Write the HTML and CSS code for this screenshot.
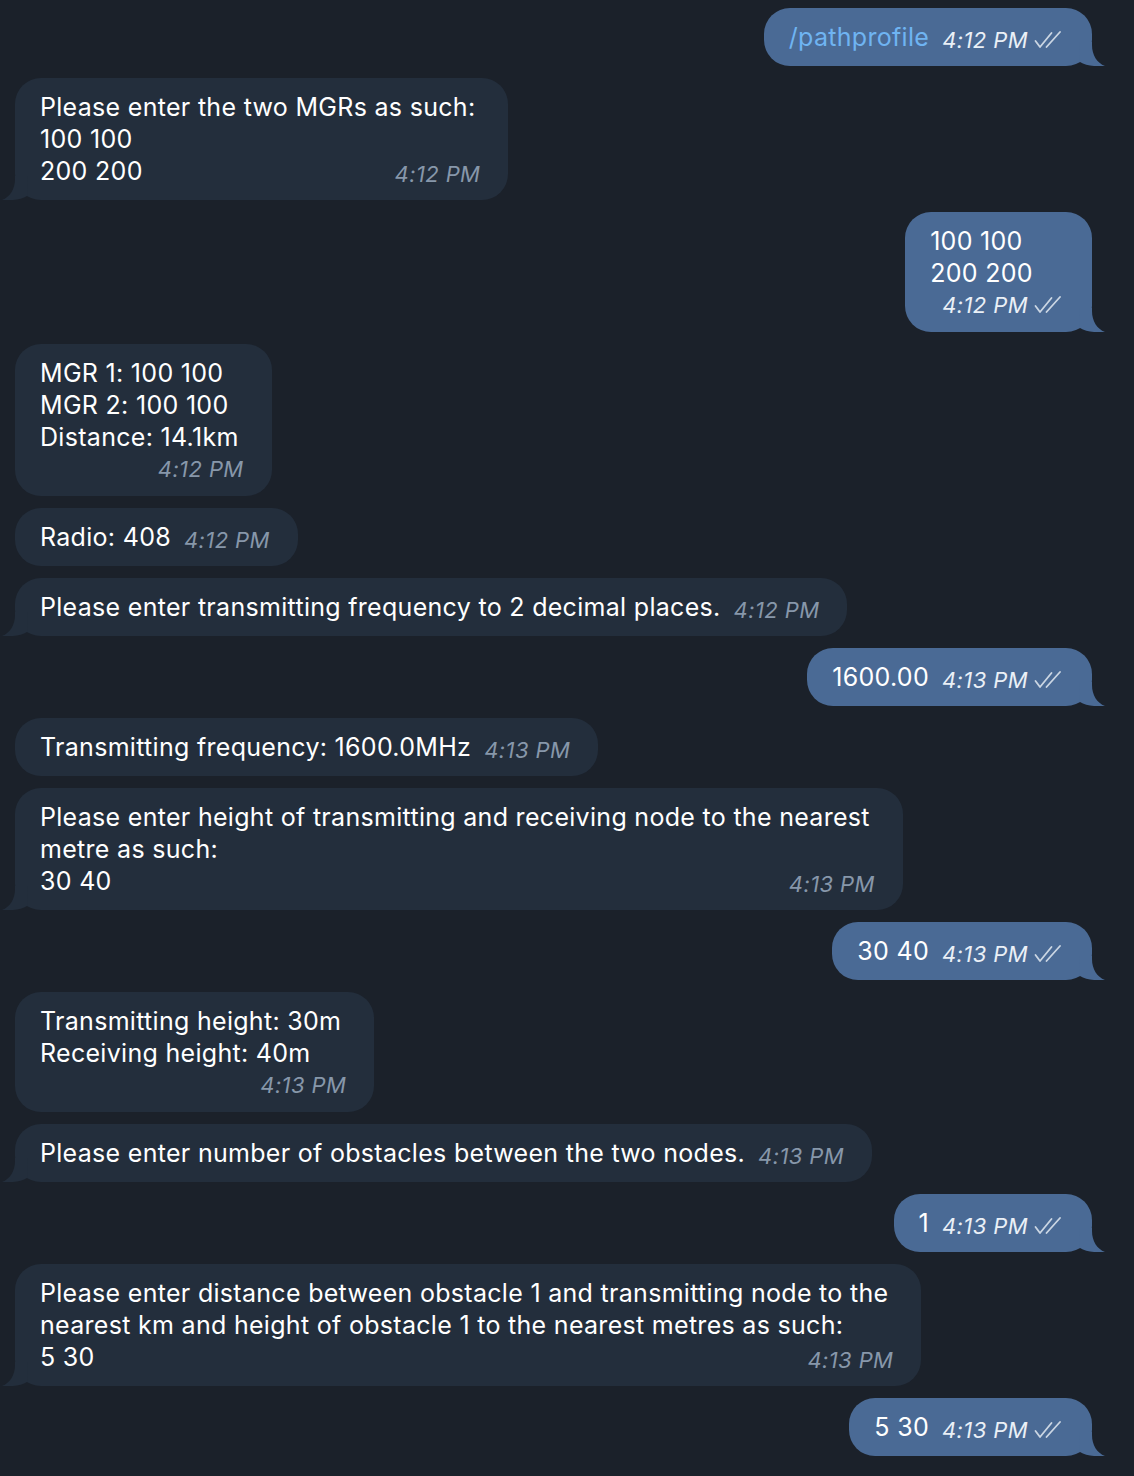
FILE: index.html
```html
<!DOCTYPE html>
<html>
<head>
<meta charset="utf-8">
<link rel="stylesheet" href="styles.css">
</head>
<body>
<div class="chat">

  <div class="row out">
    <div class="bubble out tail">
      <div class="line last"><span class="link">/pathprofile</span><span class="meta">4:12 PM<svg class="checks" viewBox="0 0 30 18" width="30" height="18"><path d="M1.5 10 L6 16 L17.5 2"/><path d="M12.5 16 L26 1"/></svg></span></div>
      <svg class="tailsvg" viewBox="0 0 26 24" width="26" height="24"><path d="M0 0 H13 V3 C13 13 18 21 26 24 C17 24.6 7 24 1 20 Z"/></svg>
    </div>
  </div>

  <div class="row in">
    <div class="bubble in tail">
      <div class="line">Please enter the two MGRs as such:</div>
      <div class="line">100 100</div>
      <div class="line last"><span>200 200</span><span class="meta">4:12 PM</span></div>
      <svg class="tailsvg" viewBox="0 0 26 24" width="26" height="24"><path d="M0 0 H13 V3 C13 13 18 21 26 24 C17 24.6 7 24 1 20 Z"/></svg>
    </div>
  </div>

  <div class="row out">
    <div class="bubble out tail">
      <div class="line">100 100</div>
      <div class="line">200 200</div>
      <div class="meta-line"><span class="meta">4:12 PM<svg class="checks" viewBox="0 0 30 18" width="30" height="18"><path d="M1.5 10 L6 16 L17.5 2"/><path d="M12.5 16 L26 1"/></svg></span></div>
      <svg class="tailsvg" viewBox="0 0 26 24" width="26" height="24"><path d="M0 0 H13 V3 C13 13 18 21 26 24 C17 24.6 7 24 1 20 Z"/></svg>
    </div>
  </div>

  <div class="row in">
    <div class="bubble in">
      <div class="line">MGR 1: 100 100</div>
      <div class="line">MGR 2: 100 100</div>
      <div class="line">Distance: 14.1km</div>
      <div class="meta-line"><span class="meta">4:12 PM</span></div>
    </div>
  </div>

  <div class="row in">
    <div class="bubble in">
      <div class="line last"><span>Radio: 408</span><span class="meta">4:12 PM</span></div>
    </div>
  </div>

  <div class="row in">
    <div class="bubble in tail">
      <div class="line last"><span>Please enter transmitting frequency to 2 decimal places.</span><span class="meta">4:12 PM</span></div>
      <svg class="tailsvg" viewBox="0 0 26 24" width="26" height="24"><path d="M0 0 H13 V3 C13 13 18 21 26 24 C17 24.6 7 24 1 20 Z"/></svg>
    </div>
  </div>

  <div class="row out">
    <div class="bubble out tail">
      <div class="line last"><span>1600.00</span><span class="meta">4:13 PM<svg class="checks" viewBox="0 0 30 18" width="30" height="18"><path d="M1.5 10 L6 16 L17.5 2"/><path d="M12.5 16 L26 1"/></svg></span></div>
      <svg class="tailsvg" viewBox="0 0 26 24" width="26" height="24"><path d="M0 0 H13 V3 C13 13 18 21 26 24 C17 24.6 7 24 1 20 Z"/></svg>
    </div>
  </div>

  <div class="row in">
    <div class="bubble in">
      <div class="line last"><span>Transmitting frequency: 1600.0MHz</span><span class="meta">4:13 PM</span></div>
    </div>
  </div>

  <div class="row in">
    <div class="bubble in tail">
      <div class="line">Please enter height of transmitting and receiving node to the nearest</div>
      <div class="line">metre as such:</div>
      <div class="line last"><span>30 40</span><span class="meta">4:13 PM</span></div>
      <svg class="tailsvg" viewBox="0 0 26 24" width="26" height="24"><path d="M0 0 H13 V3 C13 13 18 21 26 24 C17 24.6 7 24 1 20 Z"/></svg>
    </div>
  </div>

  <div class="row out">
    <div class="bubble out tail">
      <div class="line last"><span>30 40</span><span class="meta">4:13 PM<svg class="checks" viewBox="0 0 30 18" width="30" height="18"><path d="M1.5 10 L6 16 L17.5 2"/><path d="M12.5 16 L26 1"/></svg></span></div>
      <svg class="tailsvg" viewBox="0 0 26 24" width="26" height="24"><path d="M0 0 H13 V3 C13 13 18 21 26 24 C17 24.6 7 24 1 20 Z"/></svg>
    </div>
  </div>

  <div class="row in">
    <div class="bubble in">
      <div class="line">Transmitting height: 30m</div>
      <div class="line">Receiving height: 40m</div>
      <div class="meta-line"><span class="meta">4:13 PM</span></div>
    </div>
  </div>

  <div class="row in">
    <div class="bubble in tail">
      <div class="line last"><span>Please enter number of obstacles between the two nodes.</span><span class="meta">4:13 PM</span></div>
      <svg class="tailsvg" viewBox="0 0 26 24" width="26" height="24"><path d="M0 0 H13 V3 C13 13 18 21 26 24 C17 24.6 7 24 1 20 Z"/></svg>
    </div>
  </div>

  <div class="row out">
    <div class="bubble out tail">
      <div class="line last"><span>1</span><span class="meta">4:13 PM<svg class="checks" viewBox="0 0 30 18" width="30" height="18"><path d="M1.5 10 L6 16 L17.5 2"/><path d="M12.5 16 L26 1"/></svg></span></div>
      <svg class="tailsvg" viewBox="0 0 26 24" width="26" height="24"><path d="M0 0 H13 V3 C13 13 18 21 26 24 C17 24.6 7 24 1 20 Z"/></svg>
    </div>
  </div>

  <div class="row in">
    <div class="bubble in tail">
      <div class="line">Please enter distance between obstacle 1 and transmitting node to the</div>
      <div class="line">nearest km and height of obstacle 1 to the nearest metres as such:</div>
      <div class="line last"><span>5 30</span><span class="meta">4:13 PM</span></div>
      <svg class="tailsvg" viewBox="0 0 26 24" width="26" height="24"><path d="M0 0 H13 V3 C13 13 18 21 26 24 C17 24.6 7 24 1 20 Z"/></svg>
    </div>
  </div>

  <div class="row out">
    <div class="bubble out tail">
      <div class="line last"><span>5 30</span><span class="meta">4:13 PM<svg class="checks" viewBox="0 0 30 18" width="30" height="18"><path d="M1.5 10 L6 16 L17.5 2"/><path d="M12.5 16 L26 1"/></svg></span></div>
      <svg class="tailsvg" viewBox="0 0 26 24" width="26" height="24"><path d="M0 0 H13 V3 C13 13 18 21 26 24 C17 24.6 7 24 1 20 Z"/></svg>
    </div>
  </div>

</div>
</body>
</html>
```
FILE: styles.css
```css
html, body {
  margin: 0;
  padding: 0;
  background: #1b212a;
}

.chat {
  display: flex;
  flex-direction: column;
  gap: 12px;
  padding: 8px 42px 20px 15px;
  font-family: Inter, "Noto Sans", "Liberation Sans", sans-serif;
  font-size: 25px;
  line-height: 32px;
  letter-spacing: 0.3px;
  color: #ffffff;
}

.row {
  display: flex;
}

.row.in {
  justify-content: flex-start;
}

.row.out {
  justify-content: flex-end;
}

.bubble {
  position: relative;
  border-radius: 26px;
  padding: 13px 28px 13px 25px;
}

.bubble.in {
  background: #232e3c;
}

.bubble.out {
  background: #4a6a95;
}

.line {
  white-space: nowrap;
  padding-right: 5px;
}

.line.last {
  display: flex;
  justify-content: space-between;
  align-items: baseline;
  gap: 13px;
  padding-right: 0;
}

.meta-line {
  display: flex;
  justify-content: flex-end;
  align-items: flex-start;
  padding: 4px 0 2px 12px;
  height: 30px;
  box-sizing: border-box;
}

.meta {
  font-style: italic;
  font-size: 22px;
  line-height: 24px;
  letter-spacing: 0.4px;
  white-space: nowrap;
  position: relative;
  top: 2px;
  display: inline-flex;
  align-items: baseline;
}

.meta-line .meta {
  top: 0;
}

.bubble.in .meta {
  color: #8797aa;
}

.bubble.out .meta {
  color: #eaf0f7;
}

.checks {
  margin-left: 6px;
  align-self: center;
  fill: none;
  stroke: #cbd6e3;
  stroke-width: 1.8;
  stroke-linecap: round;
  stroke-linejoin: round;
}

.link {
  color: #6fb4f2;
}

.tailsvg {
  position: absolute;
  bottom: 0;
}

.bubble.out .tailsvg {
  right: -13px;
  fill: #4a6a95;
}

.bubble.in .tailsvg {
  left: -13px;
  transform: scaleX(-1);
  fill: #232e3c;
}
```
